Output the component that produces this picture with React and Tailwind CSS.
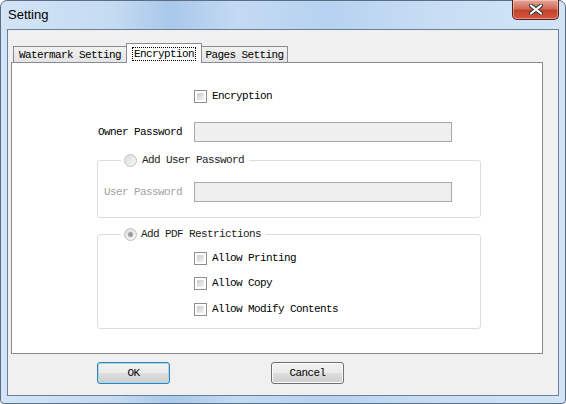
import React from 'react';

const mono = "font-['Liberation_Mono',monospace] text-[11px] tracking-[-0.6px]";

const CheckBox = () => (
  <span className="w-[13px] h-[13px] shrink-0 flex border border-[#8e8f8f] bg-white p-[2px]">
    <span className="flex-1 bg-[linear-gradient(135deg,#cbcbcb,#f4f4f4)]" />
  </span>
);

const Radio = ({ checked = false }) => (
  <span className="w-[13px] h-[13px] shrink-0 flex items-center justify-center rounded-full border border-[#c2c2c2] bg-[linear-gradient(135deg,#dcdcdc,#f8f8f8)]">
    {checked && <span className="w-[5px] h-[5px] rounded-full bg-[#9c9c9c]" />}
  </span>
);

const Field = () => (
  <div className="w-[258px] h-[20px] border border-[#a9a9a9] bg-[#efefef]" />
);

const CheckRow = ({ label, className = '' }) => (
  <div className={`flex items-center h-[13px] ${className}`}>
    <CheckBox />
    <span className={`ml-[5px] leading-[13px] text-black ${mono}`}>{label}</span>
  </div>
);

const Tab = ({ label, active, width }) => (
  <div
    className={`flex items-center justify-center border border-b-0 border-[#898c95] ${mono} ${
      active
        ? 'h-[20px] bg-white -mb-px relative z-10 -mx-px'
        : 'h-[16px] bg-[linear-gradient(#f2f2f2,#e3e3e3)]'
    }`}
    style={{ width }}
  >
    {active ? (
      <span className="border border-dotted border-black px-[1px] leading-[12px]">{label}</span>
    ) : (
      <span className="leading-[14px]">{label}</span>
    )}
  </div>
);

const Button = ({ label, focused }) => (
  <button
    className={`w-[73px] h-[22px] rounded-[3px] border ${
      focused ? 'border-[#3c7fb1] shadow-[inset_0_0_0_1px_#9fdcf6]' : 'border-[#707070] shadow-[inset_0_0_0_1px_#fbfbfb]'
    } bg-[linear-gradient(#f2f2f2_0%,#ebebeb_50%,#dddddd_51%,#cfcfcf_100%)] ${mono} text-black leading-[20px]`}
  >
    {label}
  </button>
);

export default function App() {
  return (
    <div className="w-[566px] h-[404px] flex flex-col rounded-t-[7px] rounded-b-[4px] border border-[#5a6f86] bg-[linear-gradient(90deg,#d3e4f6_0%,#c4dbf2_20%,#a9c8ea_30%,#c3daf3_42%,#b6d2f0_58%,#c9def4_78%,#d2e4f6_100%)]">
      {/* title bar */}
      <div className="h-[28px] flex items-start justify-between">
        <span className="pl-[7px] pt-[5px] leading-[18px] text-[13px] text-black font-['Liberation_Sans',sans-serif]">
          Setting
        </span>
        <div className="mr-[6px] -mt-px w-[47px] h-[20px] rounded-b-[5px] border border-t-0 border-[#5c1d16] bg-[linear-gradient(#e7a597_0%,#d06c5a_45%,#c2412c_55%,#d45a40_100%)] flex items-center justify-center shadow-[inset_0_0_0_1px_rgba(255,255,255,0.35)]">
          <svg width="14" height="11" viewBox="0 0 14 11">
            <path
              d="M2 1.5 L7 5.5 L12 1.5 M2 9.5 L7 5.5 L12 9.5"
              stroke="#3b3b3b"
              strokeWidth="4.2"
              fill="none"
              strokeLinecap="round"
            />
            <path
              d="M2 1.5 L7 5.5 L12 1.5 M2 9.5 L7 5.5 L12 9.5"
              stroke="#ffffff"
              strokeWidth="2.2"
              fill="none"
              strokeLinecap="round"
            />
          </svg>
        </div>
      </div>

      {/* client area */}
      <div className="ml-[6px] w-[552px] h-[367px] border border-[#6a7f95] bg-[#f0f0f0] flex flex-col">
        <div className="ml-[3px] mt-[13px] w-[532px] flex flex-col">
          <div className="flex items-end pl-[2px]">
            <Tab label="Watermark Setting" width={114} />
            <Tab label="Encryption" active width={76} />
            <Tab label="Pages Setting" width={87} />
          </div>

          {/* panel */}
          <div className="h-[292px] border border-[#898c95] bg-white flex flex-col">
            <div className="ml-[85px] w-[384px] flex flex-col">
              <CheckRow label="Encryption" className="mt-[27px] pl-[97px]" />

              <div className="mt-[19px] flex items-center">
                <span className={`w-[85px] text-right text-black ${mono}`}>Owner Password</span>
                <div className="ml-[12px]">
                  <Field />
                </div>
              </div>

              <fieldset className="mt-[11px] h-[65px] border border-[#d5dfe5] rounded-[3px]">
                <legend className="ml-[23px] pl-[3px] pr-[5px] h-[14px] flex items-center">
                  <Radio />
                  <span className={`ml-[5px] text-[#222] ${mono}`}>Add User Password</span>
                </legend>
                <div className="mt-[15px] flex items-center">
                  <span className={`w-[84px] text-right text-[#a3a3a3] ${mono}`}>User Password</span>
                  <div className="ml-[12px]">
                    <Field />
                  </div>
                </div>
              </fieldset>

              <fieldset className="mt-[9px] h-[102px] border border-[#d5dfe5] rounded-[3px]">
                <legend className="ml-[23px] pl-[3px] pr-[5px] h-[14px] flex items-center">
                  <Radio checked />
                  <span className={`ml-[4px] text-[#222] ${mono}`}>Add PDF Restrictions</span>
                </legend>
                <div className="pl-[96px] flex flex-col">
                  <CheckRow label="Allow Printing" className="mt-[11px]" />
                  <CheckRow label="Allow Copy" className="mt-[12px]" />
                  <CheckRow label="Allow Modify Contents" className="mt-[13px]" />
                </div>
              </fieldset>
            </div>
          </div>
        </div>

        <div className="mt-[8px] ml-[89px] flex gap-[101px]">
          <Button label="OK" focused />
          <Button label="Cancel" />
        </div>
      </div>
    </div>
  );
}
